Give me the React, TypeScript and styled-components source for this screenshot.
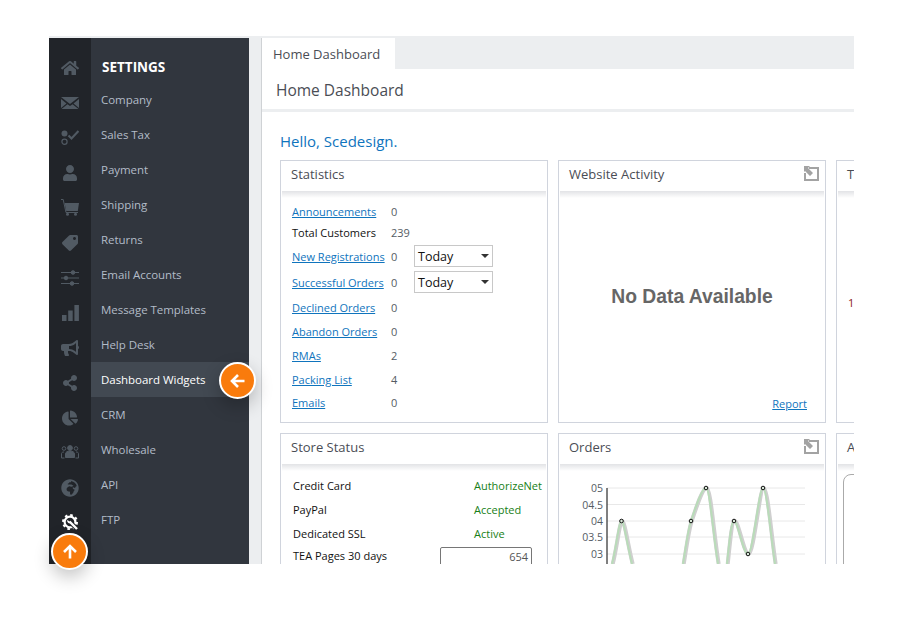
import React from 'react';
import styled, {createGlobalStyle} from 'styled-components';
import {
  FaHome,
  FaUser,
  FaTag,
  FaBullhorn,
  FaShareAlt,
  FaChartPie,
  FaGlobeAfrica,
} from 'react-icons/fa';

const FONT = `"Open Sans", "Noto Sans", sans-serif`;

const GlobalStyle = createGlobalStyle`
  html, body {
    margin: 0;
    padding: 0;
    background: #fff;
    font-family: ${FONT};
  }
`;

const Page = styled.div`
  width: 900px;
  height: 620px;
  padding: 36px 46px 56px 49px;
  box-sizing: border-box;
`;

const Frame = styled.div`
  position: relative;
  display: flex;
  height: 528px;
  width: 805px;
  border-top: 2px solid #eceef0;
  box-sizing: border-box;
`;

const Rail = styled.nav`
  width: 42px;
  flex: none;
  background: #212429;
  display: flex;
  flex-direction: column;
  align-items: center;
  padding-top: 12px;
  box-sizing: border-box;
`;

const RailIcon = styled.div<{$active?: boolean}>`
  height: 35px;
  width: 42px;
  display: flex;
  align-items: center;
  justify-content: center;
  color: ${p => (p.$active ? '#fff' : '#515a63')};
  svg {
    display: block;
  }
`;

const Menu = styled.div`
  width: 158px;
  flex: none;
  background: #31363e;
  box-sizing: border-box;
  padding-top: 11px;
`;

const MenuTitle = styled.div`
  height: 31px;
  padding: 2px 0 0 11px;
  display: flex;
  align-items: center;
  font-size: 13.5px;
  font-weight: 700;
  color: #fff;
`;

const MenuItem = styled.div<{$active?: boolean}>`
  height: 35px;
  padding-left: 10px;
  display: flex;
  align-items: center;
  font-size: 11.5px;
  letter-spacing: -0.04px;
  color: ${p => (p.$active ? '#fff' : '#b3bcc8')};
  background: ${p => (p.$active ? '#424952' : 'transparent')};
`;

const Gutter = styled.div`
  width: 13px;
  flex: none;
  background: #eceef0;
  border-right: 1px solid #cfd2d5;
  box-sizing: border-box;
`;

const Main = styled.div`
  flex: 1;
  min-width: 0;
  overflow: hidden;
  background: #fff;
`;

const TabBar = styled.div`
  height: 31px;
  background: #eceef0;
`;

const Tab = styled.div`
  width: 122px;
  height: 31px;
  padding-left: 11px;
  background: #fff;
  display: flex;
  align-items: center;
  font-size: 13px;
  color: #4a4d55;
`;

const PageTitle = styled.div`
  height: 38px;
  padding: 2px 0 0 14px;
  border-bottom: 3px solid #eceef0;
  display: flex;
  align-items: center;
  font-size: 15.5px;
  color: #4a4d55;
`;

const Body = styled.div`
  padding: 19px 0 0 18px;
`;

const Hello = styled.div`
  font-size: 15px;
  height: 29px;
  color: #0f74bd;
  line-height: 20px;
`;

const CardGrid = styled.div`
  display: grid;
  grid-template-columns: 268px 268px 268px;
  grid-template-rows: 263px 263px;
  gap: 10px;
`;

const Card = styled.div`
  border: 1px solid #d0d4dd;
  box-sizing: border-box;
  background: #fff;
  display: flex;
  flex-direction: column;
  overflow: hidden;
`;

const CardHead = styled.div`
  position: relative;
  height: 25px;
  flex: none;
  padding: 0 0 5px 9px;
  display: flex;
  align-items: center;
  font-size: 13px;
  color: #4a4d55;
  margin: 0 1px;
  &::after {
    content: '';
    position: absolute;
    left: 0;
    right: 0;
    top: 30px;
    height: 7px;
    background: linear-gradient(#e2e3e6, #ffffff);
  }
`;

const ExpandIcon = styled.svg`
  position: absolute;
  right: 5px;
  top: 5px;
`;

const StatList = styled.div`
  padding: 10px 0 0 11px;
  display: flex;
  flex-direction: column;
`;

const StatRow = styled.div<{$h: number}>`
  height: ${p => p.$h}px;
  display: flex;
  align-items: center;
  font-size: 11px;
`;

const StatLabel = styled.div`
  width: 99px;
  flex: none;
  white-space: nowrap;
  color: #111;
`;

const StatLink = styled.a`
  color: #0f74bd;
  text-decoration: underline;
`;

const StatValue = styled.div`
  width: 23px;
  flex: none;
  color: #555c64;
`;

const FakeSelect = styled.div`
  position: relative;
  width: 79px;
  height: 22px;
  border: 1px solid #c8c8c8;
  box-sizing: border-box;
  padding-left: 3px;
  display: flex;
  align-items: center;
  font-size: 12.5px;
  color: #111;
  &::after {
    content: '';
    position: absolute;
    right: 3px;
    top: 8px;
    border: 4px solid transparent;
    border-top: 4px solid #333;
    border-bottom: 0;
  }
`;

const NoData = styled.div`
  flex: 1;
  display: flex;
  align-items: center;
  justify-content: center;
  font-family: "Liberation Sans", Arial, sans-serif;
  font-size: 19.3px;
  font-weight: 700;
  color: #666;
  padding-top: 7px;
`;

const ReportLink = styled.a`
  align-self: flex-end;
  margin: 0 18px 11px 0;
  font-size: 11px;
  color: #0f74bd;
  text-decoration: underline;
`;

const StatusList = styled.div`
  padding: 9px 0 0 12px;
`;

const StatusRow = styled.div<{$h: number}>`
  height: ${p => p.$h}px;
  display: flex;
  align-items: center;
  font-size: 11px;
  color: #111;
`;

const StatusLabel = styled.div`
  width: 181px;
  flex: none;
`;

const StatusValue = styled.div`
  color: #178017;
  white-space: nowrap;
`;

const PagesLabel = styled.div`
  width: 147px;
  flex: none;
`;

const PagesBox = styled.div`
  width: 92px;
  height: 20px;
  align-self: flex-start;
  margin-top: 2px;
  border: 1px solid #767676;
  border-radius: 2px;
  box-sizing: border-box;
  padding-right: 3px;
  text-align: right;
  line-height: 17px;
  color: #555;
`;

const ClippedTitle = styled.div<{$color?: string}>`
  font-size: 11px;
  color: ${p => p.$color ?? '#4a4d55'};
  padding-left: 11px;
`;

const RoundBox = styled.div`
  margin: 10px 0 0 6px;
  height: 200px;
  border: 1px solid #aaa;
  border-radius: 8px 0 0 8px;
`;

const TopCenter = styled.div`
  flex: 1;
  display: flex;
  align-items: center;
  padding-bottom: 8px;
`;

const ChartSvg = styled.svg`
  display: block;
`;

const TagIcon = styled(FaTag)`
  transform: rotate(90deg);
`;

const Badge = styled.div<{$left: number; $top: number}>`
  position: absolute;
  left: ${p => p.$left}px;
  top: ${p => p.$top}px;
  width: 33px;
  height: 33px;
  border: 2px solid #fff;
  border-radius: 50%;
  background: #f97b0c;
  box-shadow: 0 7px 18px rgba(0, 0, 0, 0.24);
  display: flex;
  align-items: center;
  justify-content: center;
`;

const Expand = () => (
  <ExpandIcon width="16" height="15" viewBox="0 0 16 15">
    <path d="M6 2h9v12H2V7" fill="none" stroke="#a3a3a3" strokeWidth="2" />
    <path d="M1 0h6L5 2l5 5-3 3-5-5-1 1z" fill="#a3a3a3" />
  </ExpandIcon>
);

const EnvelopeIcon = () => (
  <svg width="18" height="14" viewBox="0 0 18 14">
    <path d="M0 1h18L9 8z" fill="currentColor" />
    <path d="M0 3l5.5 4.4L0 12zM18 3l-5.5 4.4L18 12zM6.5 8.2L9 10l2.5-1.8L17.5 13H.5z" fill="currentColor" />
  </svg>
);

const PersonCheckIcon = () => (
  <svg width="18" height="16" viewBox="0 0 18 16">
    <circle cx="3.5" cy="3.5" r="3" fill="currentColor" />
    <circle cx="3.5" cy="11.8" r="2.6" fill="none" stroke="currentColor" strokeWidth="1.2" />
    <path d="M7.5 5.5l3 3L17.5 1" fill="none" stroke="currentColor" strokeWidth="2.2" />
  </svg>
);

const CartIcon = () => (
  <svg width="18" height="17" viewBox="0 0 18 17">
    <path d="M0 .5h2.2L5 13.5h12" fill="none" stroke="currentColor" />
    <path d="M3.6 4H18l-1.2 8H5.2z" fill="currentColor" />
    <circle cx="6.5" cy="15.3" r="1.5" fill="currentColor" />
    <circle cx="14.5" cy="15.3" r="1.5" fill="currentColor" />
  </svg>
);

const SlidersIcon = () => (
  <svg width="18" height="16" viewBox="0 0 18 16">
    <g stroke="currentColor" strokeWidth="1" fill="currentColor">
      <path d="M0 2.5h18M0 8h18M0 13.5h18" fill="none" />
      <circle cx="12" cy="2.5" r="1.8" />
      <circle cx="5" cy="8" r="1.8" />
      <circle cx="11" cy="13.5" r="1.8" />
    </g>
  </svg>
);

const BarsIcon = () => (
  <svg width="17" height="16" viewBox="0 0 17 16" fill="currentColor">
    <rect x="0" y="10" width="4.5" height="6" />
    <rect x="6.2" y="5.5" width="4.5" height="10.5" />
    <rect x="12.4" y="0" width="4.5" height="16" />
  </svg>
);

const TeamIcon = () => (
  <svg width="18" height="15" viewBox="0 0 18 15" fill="none" stroke="currentColor">
    <circle cx="3" cy="3.5" r="1.8" />
    <circle cx="15" cy="3.5" r="1.8" />
    <path d="M.5 13V8.5c0-1 1-1.5 2.5-1.5M17.5 13V8.5c0-1-1-1.5-2.5-1.5M.5 13h3M14.5 13h3" />
    <circle cx="9" cy="3" r="2.4" fill="currentColor" />
    <path d="M4.5 12.5V9c0-2 2-3 4.5-3s4.5 1 4.5 3v3.5z" fill="currentColor" />
  </svg>
);

const GearWrenchIcon = () => (
  <svg width="17" height="17" viewBox="0 0 17 17">
    <circle cx="8" cy="8" r="5.4" fill="none" stroke="currentColor" strokeWidth="2.2" />
    <circle cx="8" cy="8" r="7" fill="none" stroke="currentColor" strokeWidth="2" strokeDasharray="2.6 2.9" />
    <path d="M8 8l7 7" stroke="#212429" strokeWidth="4.4" />
    <path d="M7.5 7.5l7.5 7.5" stroke="currentColor" strokeWidth="2.4" />
    <path d="M5.2 6a2.6 2.6 0 0 0 3.6 3L7 7z" fill="currentColor" />
  </svg>
);

const railIcons = [
  <FaHome size={18} key="home" />,
  <EnvelopeIcon key="mail" />,
  <PersonCheckIcon key="tax" />,
  <FaUser size={16} key="user" />,
  <CartIcon key="cart" />,
  <TagIcon size={16} key="tag" />,
  <SlidersIcon key="sliders" />,
  <BarsIcon key="bars" />,
  <FaBullhorn size={18} key="horn" />,
  <FaShareAlt size={16} key="share" />,
  <FaChartPie size={16} key="pie" />,
  <TeamIcon key="team" />,
  <FaGlobeAfrica size={18} key="globe" />,
];

const menuItems = [
  'Company',
  'Sales Tax',
  'Payment',
  'Shipping',
  'Returns',
  'Email Accounts',
  'Message Templates',
  'Help Desk',
  'Dashboard Widgets',
  'CRM',
  'Wholesale',
  'API',
  'FTP',
];

const OrdersChart = () => {
  const ys = [
    {label: '05', y: 24},
    {label: '04.5', y: 40.5},
    {label: '04', y: 57},
    {label: '03.5', y: 73},
    {label: '03', y: 90},
  ];
  const points = [
    [62.5, 57],
    [132, 57],
    [147, 24],
    [175, 57],
    [189, 90],
    [204, 24],
  ];
  const line =
    'M53 100C57 85 60 57 62.5 57C65 57 68 80 73 100M124 100C127 82 129 66 132 57C137 42 143 24 147 24C151 24 154 70 159 100M168 100C170 82 172 57 175 57C179 57 184 90 189 90C194 90 200 24 204 24C208 24 212 75 216 100';
  return (
    <ChartSvg width="266" height="100" viewBox="0 0 266 100" fontFamily={FONT}>
      {ys.map(t => (
        <g key={t.label}>
          <line x1="48" x2="246" y1={t.y} y2={t.y} stroke="#e8e8e8" />
          <text x="44" y={t.y + 4} textAnchor="end" fontSize="10.5" fill="#555c64">
            {t.label}
          </text>
        </g>
      ))}
      <line x1="48" x2="48" y1="24" y2="100" stroke="#000" />
      <path d={line} fill="none" stroke="#cfcfcf" strokeWidth="4" transform="translate(0.7 0)" />
      <path d={line} fill="none" stroke="#b9dcb9" strokeWidth="2" />
      {points.map(([x, y]) => (
        <circle key={x} cx={x} cy={y} r="1.8" fill="#d8e8d8" stroke="#111" strokeWidth="1" />
      ))}
    </ChartSvg>
  );
};

export default function App() {
  return (
    <Page>
      <GlobalStyle />
      <Frame>
        <Rail>
          {railIcons.map(icon => (
            <RailIcon key={icon.key}>{icon}</RailIcon>
          ))}
          <RailIcon $active>
            <GearWrenchIcon />
          </RailIcon>
        </Rail>
        <Menu>
          <MenuTitle>SETTINGS</MenuTitle>
          {menuItems.map(item => (
            <MenuItem key={item} $active={item === 'Dashboard Widgets'}>
              {item}
            </MenuItem>
          ))}
        </Menu>
        <Gutter />
        <Main>
          <TabBar>
            <Tab>Home Dashboard</Tab>
          </TabBar>
          <PageTitle>Home Dashboard</PageTitle>
          <Body>
            <Hello>Hello, Scedesign.</Hello>
            <CardGrid>
              <Card>
                <CardHead>Statistics</CardHead>
                <StatList>
                  <StatRow $h={21}><StatLabel><StatLink>Announcements</StatLink></StatLabel><StatValue>0</StatValue></StatRow>
                  <StatRow $h={21}><StatLabel>Total Customers</StatLabel><StatValue>239</StatValue></StatRow>
                  <StatRow $h={26}><StatLabel><StatLink>New Registrations</StatLink></StatLabel><StatValue>0</StatValue><FakeSelect>Today</FakeSelect></StatRow>
                  <StatRow $h={26}><StatLabel><StatLink>Successful Orders</StatLink></StatLabel><StatValue>0</StatValue><FakeSelect>Today</FakeSelect></StatRow>
                  <StatRow $h={25}><StatLabel><StatLink>Declined Orders</StatLink></StatLabel><StatValue>0</StatValue></StatRow>
                  <StatRow $h={23}><StatLabel><StatLink>Abandon Orders</StatLink></StatLabel><StatValue>0</StatValue></StatRow>
                  <StatRow $h={24}><StatLabel><StatLink>RMAs</StatLink></StatLabel><StatValue>2</StatValue></StatRow>
                  <StatRow $h={24}><StatLabel><StatLink>Packing List</StatLink></StatLabel><StatValue>4</StatValue></StatRow>
                  <StatRow $h={22}><StatLabel><StatLink>Emails</StatLink></StatLabel><StatValue>0</StatValue></StatRow>
                </StatList>
              </Card>
              <Card>
                <CardHead>Website Activity<Expand /></CardHead>
                <NoData>No Data Available</NoData>
                <ReportLink>Report</ReportLink>
              </Card>
              <Card>
                <CardHead>T</CardHead>
                <TopCenter><ClippedTitle $color="#8a2020">1</ClippedTitle></TopCenter>
              </Card>
              <Card>
                <CardHead>Store Status</CardHead>
                <StatusList>
                  <StatusRow $h={24}><StatusLabel>Credit Card</StatusLabel><StatusValue>AuthorizeNet</StatusValue></StatusRow>
                  <StatusRow $h={24}><StatusLabel>PayPal</StatusLabel><StatusValue>Accepted</StatusValue></StatusRow>
                  <StatusRow $h={24}><StatusLabel>Dedicated SSL</StatusLabel><StatusValue>Active</StatusValue></StatusRow>
                  <StatusRow $h={20}><PagesLabel>TEA Pages 30 days</PagesLabel><PagesBox>654</PagesBox></StatusRow>
                </StatusList>
              </Card>
              <Card>
                <CardHead>Orders<Expand /></CardHead>
                <OrdersChart />
              </Card>
              <Card>
                <CardHead>A</CardHead>
                <RoundBox />
              </Card>
            </CardGrid>
          </Body>
        </Main>
        <Badge $left={170} $top={324}>
          <svg width="16" height="16" viewBox="0 0 16 16">
            <path d="M14.5 8H2M8 2L2 8l6 6" fill="none" stroke="#fff" strokeWidth="2.6" />
          </svg>
        </Badge>
        <Badge $left={2} $top={495}>
          <svg width="16" height="16" viewBox="0 0 16 16">
            <path d="M8 14.5V2M2 8l6-6 6 6" fill="none" stroke="#fff" strokeWidth="2.6" />
          </svg>
        </Badge>
      </Frame>
    </Page>
  );
}
